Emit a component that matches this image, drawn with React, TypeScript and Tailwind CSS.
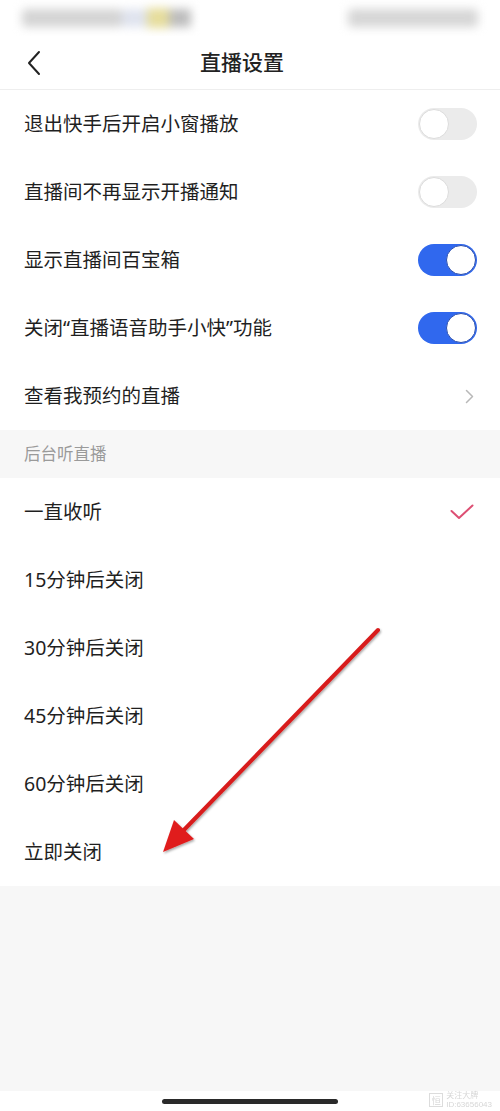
import React from "react";

const font = { fontFamily: '"Noto Sans", "Noto Sans CJK SC", sans-serif' };

function Toggle({ on }: { on: boolean }) {
  return (
    <div
      className={`flex h-[32px] w-[59px] items-center rounded-full p-[1px] ${
        on ? "justify-end bg-[#3068ee]" : "justify-start bg-[#ebebeb]"
      }`}
    >
      <div
        className={`h-[30px] w-[30px] rounded-full bg-white border ${
          on ? "border-[#2a4fb0]" : "border-[#dcdcdc]"
        }`}
      />
    </div>
  );
}

const switches = [
  { label: "退出快手后开启小窗播放", on: false },
  { label: "直播间不再显示开播通知", on: false },
  { label: "显示直播间百宝箱", on: true },
  { label: "关闭“直播语音助手小快”功能", on: true },
];

const timers = ["一直收听", "15分钟后关闭", "30分钟后关闭", "45分钟后关闭", "60分钟后关闭", "立即关闭"];

export default function App() {
  return (
    <div className="relative flex h-[1111px] w-[500px] flex-col overflow-hidden bg-[#f7f7f7] text-[#1f1f1f]" style={font}>
      {/* status bar, blurred */}
      <div className="flex h-[36px] items-center justify-between bg-white px-[22px]">
        <div className="flex h-[22px] items-center gap-0 blur-[5px]">
          <div className="h-[18px] w-[100px] rounded bg-[#d4d4d4]" />
          <div className="h-[18px] w-[25px] bg-[#dfe3ee]" />
          <div className="h-[20px] w-[22px] bg-[#e6dd9c]" />
          <div className="h-[18px] w-[22px] bg-[#bdbdbd]" />
        </div>
        <div className="h-[18px] w-[130px] rounded bg-[#d6d6d6] blur-[5px]" />
      </div>

      {/* header */}
      <div className="relative flex h-[54px] items-center justify-center border-b border-[#eeeeee] bg-white pr-[16px]">
        <svg className="absolute left-[24px] top-[14px]" width="20" height="26" viewBox="0 0 20 26">
          <path d="M15 2 L5 13 L15 24" fill="none" stroke="#222" strokeWidth="2" strokeLinecap="round" strokeLinejoin="round" />
        </svg>
        <span className="text-[21px] font-medium text-[#222]">直播设置</span>
      </div>

      {/* switches */}
      <div className="flex flex-col bg-white">
        {switches.map((s) => (
          <div key={s.label} className="flex h-[68px] items-center justify-between pl-[24px] pr-[23px]">
            <span className="text-[19.5px]">{s.label}</span>
            <Toggle on={s.on} />
          </div>
        ))}
        <div className="flex h-[68px] items-center justify-between pl-[24px] pr-[26px]">
          <span className="text-[19.5px]">查看我预约的直播</span>
          <svg width="9" height="15" viewBox="0 0 9 15">
            <path d="M1.5 1.5 L7.5 7.5 L1.5 13.5" fill="none" stroke="#b8b8b8" strokeWidth="1.5" strokeLinecap="round" strokeLinejoin="round" />
          </svg>
        </div>
      </div>

      {/* section label */}
      <div className="flex h-[48px] items-center px-[24px] text-[16.5px] text-[#9a9a9a]">后台听直播</div>

      {/* timer options */}
      <div className="flex flex-col bg-white">
        {timers.map((t, i) => (
          <div key={t} className="flex h-[68px] items-center justify-between pl-[24px] pr-[26px]">
            <span className="text-[19.5px]">{t}</span>
            {i === 0 && (
              <svg width="24" height="16" viewBox="0 0 24 16">
                <path d="M1.5 7 L9 14 L22.5 1.5" fill="none" stroke="#dd4f73" strokeWidth="2" strokeLinecap="round" strokeLinejoin="round" />
              </svg>
            )}
          </div>
        ))}
      </div>

      <div className="flex-1" />

      {/* home indicator */}
      <div className="flex h-[20px] items-center justify-center bg-white">
        <div className="h-[5px] w-[176px] rounded-full bg-[#2a2a2a]" />
      </div>

      {/* watermark */}
      <div className="absolute bottom-[2px] right-[8px] flex items-center gap-[3px] opacity-40">
        <div className="flex h-[14px] w-[14px] items-center justify-center border border-[#aaa] text-[9px] leading-none text-[#999]">恒</div>
        <div className="flex flex-col text-[8px] leading-[9px] text-[#999]" style={{ fontFamily: '"Liberation Sans", "Noto Sans CJK SC", sans-serif' }}>
          <span>关注大牌</span>
          <span>ID:63656043</span>
        </div>
      </div>

      {/* red annotation arrow */}
      <svg className="pointer-events-none absolute left-0 top-0" width="500" height="1111" viewBox="0 0 500 1111">
        <defs>
          <filter id="arrowShadow" x="-20%" y="-20%" width="140%" height="140%">
            <feDropShadow dx="1" dy="1.5" stdDeviation="1.2" floodColor="#000" floodOpacity="0.35" />
          </filter>
        </defs>
        <g filter="url(#arrowShadow)">
          <line x1="378" y1="630" x2="180" y2="834" stroke="#d81c1c" strokeWidth="4" strokeLinecap="round" />
          <polygon points="163,852 174,820 194,839" fill="#e01e1e" />
        </g>
      </svg>
    </div>
  );
}
